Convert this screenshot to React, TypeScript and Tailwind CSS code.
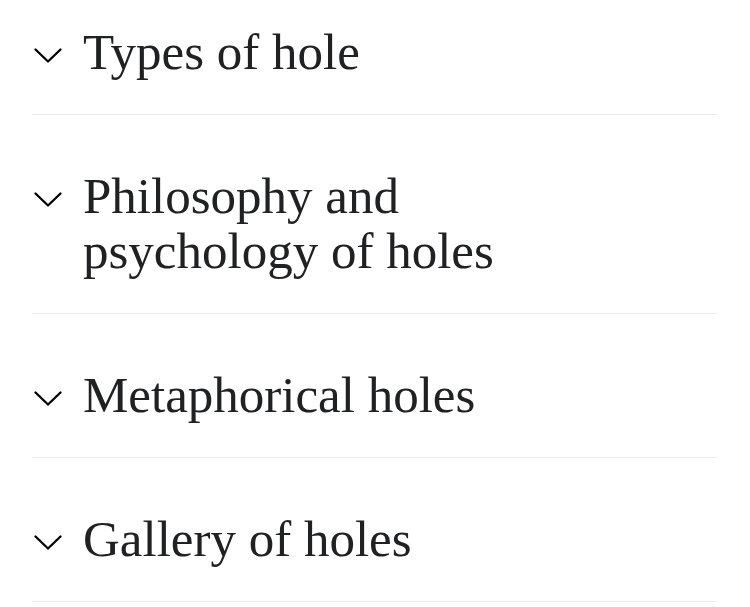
import React from 'react';

const sections = [
  'Types of hole',
  'Philosophy and psychology of holes',
  'Metaphorical holes',
  'Gallery of holes',
];

const Chevron: React.FC = () => (
  <svg width="28" height="15" viewBox="0 0 28 15" fill="none" className="block">
    <polyline
      points="1.5,1.5 14,13.5 26.5,1.5"
      stroke="#000000"
      strokeWidth="2.3"
      strokeLinecap="round"
      strokeLinejoin="round"
    />
  </svg>
);

const App: React.FC = () => {
  return (
    <div className="w-[750px] h-[607px] overflow-hidden bg-white">
      <div className="pl-[32px] pr-[33px] -mt-[29px]">
        {sections.map((title) => (
          <div
            key={title}
            className="flex items-start pt-[54px] pb-[34px] border-b border-[#eaecf0]"
          >
            <div className="w-[51px] h-[55px] flex items-center pl-[2px] pt-[5px] shrink-0">
              <Chevron />
            </div>
            <h2
              className="max-w-[480px] text-[51px] leading-[55px] text-[#202122] font-normal"
              style={{ fontFamily: '"Liberation Serif", "Times New Roman", serif' }}
            >
              {title}
            </h2>
          </div>
        ))}
      </div>
    </div>
  );
};

export default App;
